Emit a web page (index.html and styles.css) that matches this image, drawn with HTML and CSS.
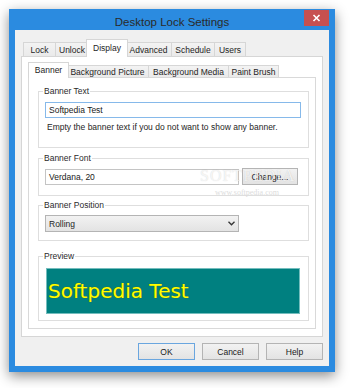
FILE: index.html
```html
<!DOCTYPE html>
<html>
<head>
<meta charset="utf-8">
<link rel="stylesheet" href="styles.css">
</head>
<body>
<div class="window">
  <div class="titlebar">
    <span class="title">Desktop Lock Settings</span>
    <div class="close"><svg width="25" height="16" viewBox="0 0 25 16"><path d="M9.5 5 L15.5 11 M15.5 5 L9.5 11" stroke="#fff" stroke-width="1.6" fill="none"/></svg></div>
  </div>
  <div class="client">
    <div class="tabs">
      <div class="tab w-lock">Lock</div>
      <div class="tab w-unlock">Unlock</div>
      <div class="tab w-display active">Display</div>
      <div class="tab w-adv">Advanced</div>
      <div class="tab w-sched">Schedule</div>
      <div class="tab w-users">Users</div>
    </div>
    <div class="panel">
      <div class="subtabs">
        <div class="stab w-banner active">Banner</div>
        <div class="stab w-bpic">Background Picture</div>
        <div class="stab w-bmed">Background Media</div>
        <div class="stab w-brush">Paint Brush</div>
      </div>
      <div class="subpanel">
        <fieldset class="group g-text">
          <legend>Banner Text</legend>
          <div class="input focus">Softpedia Test</div>
          <div class="hint">Empty the banner text if you do not want to show any banner.</div>
        </fieldset>
        <fieldset class="group g-font">
          <legend>Banner Font</legend>
          <div class="row">
            <div class="input font-input">Verdana, 20</div>
            <div class="btn change">Change...</div>
          </div>
        </fieldset>
        <fieldset class="group g-pos">
          <legend>Banner Position</legend>
          <div class="select"><span>Rolling</span><svg width="7" height="5" viewBox="0 0 7 5"><path d="M0.5 0.8 L3.5 3.8 L6.5 0.8" stroke="#333" stroke-width="1.3" fill="none"/></svg></div>
        </fieldset>
        <fieldset class="group g-prev">
          <legend>Preview</legend>
          <div class="preview">Softpedia Test</div>
        </fieldset>
      </div>
    </div>
    <div class="buttons">
      <div class="btn dlg default">OK</div>
      <div class="btn dlg">Cancel</div>
      <div class="btn dlg">Help</div>
    </div>
  </div>
</div>
<div class="wm wm-big">SOFTPEDIA</div>
<div class="wm wm-small">www.softpedia.com</div>
</body>
</html>
```

FILE: styles.css
```css
html, body {
  margin: 0;
  padding: 0;
  background: #ffffff;
}
body {
  font-family: "Liberation Sans", Arial, sans-serif;
  font-size: 8.5px;
  color: #1e1e1e;
  position: relative;
  width: 350px;
  height: 388px;
  overflow: hidden;
}
.window {
  margin: 9px 0 0 9px;
  width: 326px;
  height: 363px;
  box-sizing: border-box;
  background: #2b8be0;
  padding: 0 6px 6px;
  box-shadow: 0 4px 12px rgba(0,0,0,0.45);
}
.titlebar {
  height: 21px;
  display: grid;
  grid-template-columns: 1fr auto 1fr;
  align-items: start;
}
.title {
  grid-column: 2;
  font-size: 11.5px;
  line-height: 14px;
  padding-top: 6px;
  color: #2a2a2a;
  white-space: nowrap;
}
.close {
  grid-column: 3;
  justify-self: end;
  margin-top: 1px;
  width: 25px;
  height: 16px;
  background: #c75050;
}
.close svg { display: block; }
.client {
  background: #f0f0f0;
  height: 336px;
  box-sizing: border-box;
  padding: 9px 6px 0;
}
.tabs {
  display: flex;
  align-items: flex-end;
  height: 17px;
  padding-left: 2px;
}
.tab, .stab {
  box-sizing: border-box;
  border: 1px solid #d6d6d6;
  border-bottom: none;
  background: linear-gradient(#f3f3f3, #eaeaea);
  display: flex;
  align-items: center;
  justify-content: center;
  margin-right: -1px;
  white-space: nowrap;
  flex: none;
}
.tab { height: 14px; }
.stab { height: 12px; }
.tab.active, .stab.active {
  background: #ffffff;
  position: relative;
  z-index: 1;
  margin-left: -2px;
  margin-right: -3px;
  margin-bottom: -1px;
}
.tab.active { height: 18px; padding-bottom: 1px; }
.stab.active { height: 16px; padding-bottom: 1px; }
.w-lock { width: 33px; }
.w-unlock { width: 34px; }
.w-display { width: 42px; }
.w-adv { width: 47px; }
.w-sched { width: 44px; }
.w-users { width: 32px; }
.w-banner { width: 41px; }
.w-bpic { width: 83px; }
.w-bmed { width: 81px; }
.w-brush { width: 51px; }
.panel {
  height: 281px;
  box-sizing: border-box;
  border: 1px solid #d6d6d6;
  background: #ffffff;
  padding: 5px 6px 0;
}
.subtabs {
  display: flex;
  align-items: flex-end;
  height: 15px;
  padding-left: 2px;
}
.subpanel {
  height: 252px;
  box-sizing: border-box;
  border: 1px solid #d9d9d9;
  background: #ffffff;
  padding: 8px 6px 0 9px;
  display: flex;
  flex-direction: column;
}
.group {
  margin: 0;
  box-sizing: border-box;
  border: 1px solid #dedede;
  padding: 0 7px 0 6px;
  min-width: 0;
  flex: none;
}
.group legend {
  padding: 0 1px;
  margin-left: -2px;
  line-height: 10px;
  font-size: 8.5px;
  color: #2a2a2a;
}
.g-text { height: 62px; margin-bottom: 5px; }
.g-font { height: 43px; margin-bottom: 4px; }
.g-pos { height: 41px; margin-bottom: 10px; }
.g-prev { height: 70px; }
.input {
  box-sizing: border-box;
  height: 16px;
  border: 1px solid #c4c4c4;
  background: #ffffff;
  padding-left: 3px;
  line-height: 14px;
  color: #1a1a1a;
}
.input.focus {
  margin-top: 6px;
  border-color: #86b9ea;
}
.hint {
  margin-top: 4px;
  padding-left: 2px;
  line-height: 10px;
}
.row {
  display: flex;
  align-items: center;
  margin-top: 5px;
}
.font-input { width: 194px; }
.btn {
  box-sizing: border-box;
  border: 1px solid #b4b4b4;
  background: linear-gradient(#f2f2f2, #e3e3e3);
  display: flex;
  align-items: center;
  justify-content: center;
  color: #1a1a1a;
}
.change {
  width: 56px;
  height: 17px;
  margin-left: 3px;
}
.select {
  margin-top: 5px;
  width: 194px;
  height: 17px;
  box-sizing: border-box;
  border: 1px solid #b4b4b4;
  background: linear-gradient(#f2f2f2, #e3e3e3);
  display: flex;
  align-items: center;
  justify-content: space-between;
  padding: 0 3px 0 3px;
}
.select svg { display: block; }
.preview {
  margin-top: 7px;
  margin-left: 1px;
  width: 254px;
  height: 46px;
  box-sizing: border-box;
  border: 1px solid #74bdbd;
  background: #008080;
  color: #ffff00;
  font-family: "DejaVu Sans", Verdana, sans-serif;
  font-size: 20px;
  line-height: 24px;
  display: flex;
  align-items: center;
  padding-left: 1px;
  text-shadow: 0 0 1px #5a5a00;
}
.buttons {
  display: flex;
  justify-content: flex-end;
  gap: 7px;
  margin-top: 6px;
}
.dlg {
  width: 57px;
  height: 17px;
}
.dlg.default {
  border-color: #6aa6df;
}
.wm {
  position: absolute;
  white-space: nowrap;
  pointer-events: none;
}
.wm-big {
  left: 200px;
  top: 167px;
  font-family: "Liberation Serif", serif;
  font-size: 16px;
  letter-spacing: 1px;
  color: rgba(255,255,255,0.75);
  text-shadow: 0 0 1px rgba(0,0,0,0.18);
}
.wm-small {
  left: 215px;
  top: 188px;
  font-family: "Liberation Serif", serif;
  font-size: 8px;
  color: #dcdcdc;
}
```
